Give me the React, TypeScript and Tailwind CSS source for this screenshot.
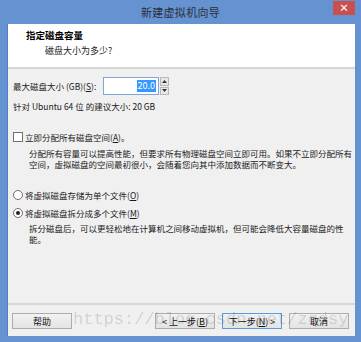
import React from "react"

const cjk = { fontFamily: '"Noto Sans CJK SC", "Noto Sans", sans-serif' }

function U({ children }: { children: React.ReactNode }) {
  return <span className="underline underline-offset-1">{children}</span>
}

function Btn({ children, primary }: { children: React.ReactNode; primary?: boolean }) {
  return (
    <div
      className={`h-[16px] w-[60px] flex items-center justify-center text-[9px] leading-none text-[#111] bg-gradient-to-b from-[#f2f2f2] to-[#e3e3e3] border ${
        primary ? "border-[#5a9be0]" : "border-[#acacac]"
      }`}
    >
      {children}
    </div>
  )
}

export default function App() {
  return (
    <div className="w-[361px] h-[342px] bg-[#6592d1] flex flex-col overflow-hidden" style={cjk}>
      {/* title bar */}
      <div className="relative h-[24px] flex items-center justify-center shrink-0">
        <span className="text-[11px] text-[#2a2f38] tracking-[0.3px]">新建虚拟机向导</span>
        <div className="absolute right-[6px] top-[1px] w-[22px] h-[14px] bg-[#c9504e] flex items-center justify-center text-white text-[10px] leading-none font-bold">
          ×
        </div>
      </div>

      <div className="flex-1 mx-[7px] mr-[6px] mb-[6px] flex flex-col bg-[#f0f0f0] border-l border-[#4f7fc2]">
        {/* header */}
        <div className="h-[43px] bg-white pl-[18px] pt-[4px] shrink-0">
          <div className="text-[9.5px] leading-[15px] font-bold text-black">指定磁盘容量</div>
          <div className="text-[9px] leading-[15px] text-[#222] pl-[19px]">磁盘大小为多少?</div>
        </div>
        <div className="h-[2px] bg-[#d6d6d6] shrink-0" />

        {/* body */}
        <div className="flex-1 pl-[5px] flex flex-col text-[8.5px] text-[#1a1a1a]">
          <div className="mt-[8px] h-[18px] flex items-center">
            <span className="w-[90px] whitespace-nowrap">
              最大磁盘大小 (GB)(<U>S</U>):
            </span>
            <div className="w-[56px] h-[18px] bg-white border border-[#7fa6d8] flex items-center justify-end pr-[2px]">
              <span className="bg-[#3399ff] text-white text-[9px] leading-[12px] px-[1px]">20.0</span>
            </div>
            <div className="w-[9px] h-[18px] flex flex-col gap-[1px] ml-[1px]">
              <div className="flex-1 bg-[#e8e8e8] border border-[#b8b8b8] flex items-center justify-center">
                <svg width="5" height="3" viewBox="0 0 5 3">
                  <path d="M0 3 L2.5 0 L5 3 Z" fill="#333" />
                </svg>
              </div>
              <div className="flex-1 bg-[#e8e8e8] border border-[#b8b8b8] flex items-center justify-center">
                <svg width="5" height="3" viewBox="0 0 5 3">
                  <path d="M0 0 L2.5 3 L5 0 Z" fill="#333" />
                </svg>
              </div>
            </div>
          </div>
          <div className="mt-[5px] leading-[12px] whitespace-nowrap">针对 Ubuntu 64 位 的建议大小: 20 GB</div>

          <div className="mt-[19px] h-[12px] flex items-center gap-[2px]">
            <div className="w-[10px] h-[10px] border border-[#707070] bg-white" />
            <span className="whitespace-nowrap">
              立即分配所有磁盘空间(<U>A</U>)。
            </span>
          </div>
          <div className="mt-[5px] ml-[16px] leading-[11px] whitespace-nowrap">
            <div>分配所有容量可以提高性能，但要求所有物理磁盘空间立即可用。如果不立即分配所有</div>
            <div>空间，虚拟磁盘的空间最初很小，会随着您向其中添加数据而不断变大。</div>
          </div>

          <div className="mt-[19px] h-[12px] flex items-center gap-[2px]">
            <div className="w-[10px] h-[10px] rounded-full border border-[#707070] bg-white" />
            <span className="whitespace-nowrap">
              将虚拟磁盘存储为单个文件(<U>O</U>)
            </span>
          </div>
          <div className="mt-[6px] h-[12px] flex items-center gap-[2px]">
            <div className="w-[10px] h-[10px] rounded-full border border-[#707070] bg-white flex items-center justify-center">
              <div className="w-[4px] h-[4px] rounded-full bg-[#222]" />
            </div>
            <span className="whitespace-nowrap">
              将虚拟磁盘拆分成多个文件(<U>M</U>)
            </span>
          </div>
          <div className="mt-[4px] ml-[16px] leading-[11px] whitespace-nowrap">
            <div>拆分磁盘后，可以更轻松地在计算机之间移动虚拟机，但可能会降低大容量磁盘的性</div>
            <div>能。</div>
          </div>
          <div className="flex-1" />
        </div>

        {/* footer */}
        <div className="h-[2px] bg-[#d6d6d6] shrink-0" />
        <div className="relative h-[31px] pt-[8px] pl-[4px] pr-[6px] flex shrink-0">
          <Btn>帮助</Btn>
          <div className="flex-1" />
          <Btn>
            &lt; 上一步(<U>B</U>)
          </Btn>
          <div className="w-[7px]" />
          <Btn primary>
            下一步(<U>N</U>) &gt;
          </Btn>
          <div className="w-[7px]" />
          <Btn>取消</Btn>
          <div
            className="absolute left-[65px] top-[5px] text-[17px] leading-[20px] text-black/15 whitespace-nowrap pointer-events-none"
            style={{ fontFamily: '"Liberation Mono", monospace' }}
          >
            https://blog.csdn.net/zqdsy
          </div>
        </div>
      </div>
    </div>
  )
}
